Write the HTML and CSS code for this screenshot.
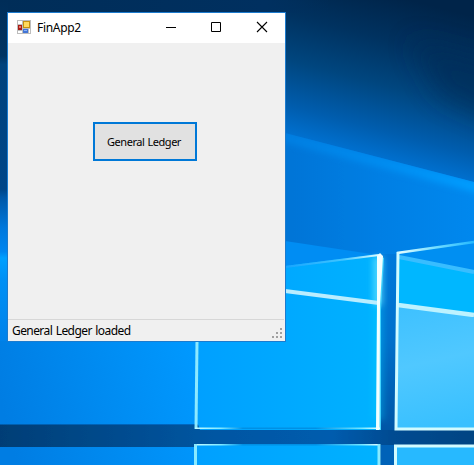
FILE: index.html
```html
<!DOCTYPE html>
<html lang="en">
<head>
<meta charset="utf-8">
<title>FinApp2</title>
<link rel="stylesheet" href="styles.css">
</head>
<body>
<main class="desktop">
  <svg class="wallpaper" width="474" height="465" viewBox="0 0 474 465" aria-hidden="true">
    <defs>
      <linearGradient id="sky" x1="410" y1="0" x2="365" y2="172" gradientUnits="userSpaceOnUse">
        <stop offset="0" stop-color="#002449"/><stop offset=".25" stop-color="#003260"/>
        <stop offset=".5" stop-color="#00467f"/><stop offset=".75" stop-color="#005dae"/><stop offset="1" stop-color="#007ce4"/>
      </linearGradient>
      <linearGradient id="top" x1="0" y1="0" x2="330" y2="0" gradientUnits="userSpaceOnUse">
        <stop offset="0" stop-color="#002d58"/><stop offset=".8" stop-color="#003060"/><stop offset="1" stop-color="#002f5d" stop-opacity="0"/>
      </linearGradient>
      <linearGradient id="left" x1="0" y1="0" x2="0" y2="430" gradientUnits="userSpaceOnUse">
        <stop offset="0" stop-color="#002d58"/><stop offset=".13" stop-color="#003463"/>
        <stop offset=".15" stop-color="#00427c"/><stop offset=".44" stop-color="#004688"/>
        <stop offset=".46" stop-color="#0058a8"/><stop offset=".53" stop-color="#0078dc"/>
        <stop offset=".585" stop-color="#0086f0"/><stop offset=".6" stop-color="#00a0ff"/>
        <stop offset=".65" stop-color="#0090f5"/><stop offset=".8" stop-color="#0082ea"/><stop offset="1" stop-color="#007ce2"/>
      </linearGradient>
      <linearGradient id="beam" x1="285" y1="0" x2="474" y2="0" gradientUnits="userSpaceOnUse">
        <stop offset="0" stop-color="#0074d6"/><stop offset=".5" stop-color="#007fe4"/><stop offset="1" stop-color="#0088ee"/>
      </linearGradient>
      <linearGradient id="edge" x1="285" y1="0" x2="474" y2="0" gradientUnits="userSpaceOnUse">
        <stop offset="0" stop-color="#007fe2"/><stop offset=".5" stop-color="#008cf0"/><stop offset="1" stop-color="#009dff"/>
      </linearGradient>
      <linearGradient id="floor" x1="0" y1="400" x2="198" y2="350" gradientUnits="userSpaceOnUse">
        <stop offset="0" stop-color="#007de3"/><stop offset="1" stop-color="#0099ff"/>
      </linearGradient>
      <linearGradient id="pane" x1="197" y1="0" x2="380" y2="0" gradientUnits="userSpaceOnUse">
        <stop offset="0" stop-color="#00a0ff"/><stop offset="1" stop-color="#00b2ff"/>
      </linearGradient>
      <linearGradient id="paneR" x1="400" y1="300" x2="430" y2="430" gradientUnits="userSpaceOnUse">
        <stop offset="0" stop-color="#3cc0ff"/><stop offset=".5" stop-color="#50c8ff"/><stop offset="1" stop-color="#38c0ff"/>
      </linearGradient>
      <linearGradient id="bar" x1="0" y1="0" x2="474" y2="0" gradientUnits="userSpaceOnUse">
        <stop offset="0" stop-color="#003e76"/><stop offset=".45" stop-color="#0056a2"/>
        <stop offset=".7" stop-color="#005cae"/><stop offset=".83" stop-color="#004b91"/><stop offset="1" stop-color="#004483"/>
      </linearGradient>
      <linearGradient id="post" x1="0" y1="250" x2="0" y2="430" gradientUnits="userSpaceOnUse">
        <stop offset="0" stop-color="#0079dc"/><stop offset=".5" stop-color="#0070cb"/><stop offset="1" stop-color="#0056a6"/>
      </linearGradient>
      <linearGradient id="ray" x1="285" y1="0" x2="380" y2="0" gradientUnits="userSpaceOnUse">
        <stop offset="0" stop-color="#18a4ff"/><stop offset=".6" stop-color="#40c4ff"/><stop offset="1" stop-color="#e4ffff"/>
      </linearGradient>
      <linearGradient id="rayR" x1="398" y1="0" x2="474" y2="0" gradientUnits="userSpaceOnUse">
        <stop offset="0" stop-color="#e8ffff"/><stop offset=".5" stop-color="#72ddff"/><stop offset="1" stop-color="#23b8ff"/>
      </linearGradient>
      <linearGradient id="sill" x1="197" y1="0" x2="380" y2="0" gradientUnits="userSpaceOnUse">
        <stop offset="0" stop-color="#bdfaff"/><stop offset=".13" stop-color="#80e8ff"/><stop offset=".25" stop-color="#0090e4"/>
        <stop offset=".65" stop-color="#0090e4"/><stop offset=".9" stop-color="#72e5ff"/><stop offset="1" stop-color="#eaffff"/>
      </linearGradient>
      <filter id="soft1" x="-20%" y="-20%" width="140%" height="140%"><feGaussianBlur stdDeviation=".7"/></filter>
      <filter id="soft3" filterUnits="userSpaceOnUse" x="180" y="80" width="320" height="380"><feGaussianBlur stdDeviation="3"/></filter>
      <filter id="soft12" filterUnits="userSpaceOnUse" x="180" y="-40" width="380" height="380"><feGaussianBlur stdDeviation="13"/></filter>
      <clipPath id="beam-clip"><path d="M285 133L474 182V300H285Z"/></clipPath>
    </defs>
    <rect width="474" height="465" fill="url(#sky)"/>
    <rect width="330" height="13" fill="url(#top)"/>
    <rect width="8" height="465" fill="url(#left)"/>
    <path d="M410 40L520 70V132L440 95Z" fill="#002c55" opacity=".6" filter="url(#soft12)"/>
    <path d="M285 133L474 182V300H285Z" fill="url(#beam)" filter="url(#soft1)"/>
    <path d="M280 136L480 188" stroke="url(#edge)" stroke-width="11" filter="url(#soft3)" clip-path="url(#beam-clip)"/>
    <path d="M285 241L378 255 285 268Z" fill="#008df3" filter="url(#soft1)"/>
    <path d="M0 341H198V424H0Z" fill="url(#floor)"/>
    <path d="M197 277L380 254V430H197Z" fill="url(#pane)"/>
    <path d="M380 254H398V465H380Z" fill="url(#post)"/>
    <path d="M378 258V420" stroke="#00ceff" stroke-width="12" opacity=".35" filter="url(#soft3)"/>
    <path d="M378 257V305" stroke="#7fe4ff" stroke-width="9" opacity=".6" filter="url(#soft3)"/>
    <path d="M379 255L384 258 381 310V430H377V258Z" fill="#43d4ff" filter="url(#soft1)"/>
    <path d="M397 252L474 242V430H397Z" fill="#008ff2"/>
    <path d="M399 256L474 271V430H397Z" fill="#00b7ff"/>
    <path d="M399 306L474 316V430H397Z" fill="url(#paneR)"/>
    <path d="M399 257L474 272" stroke="#38bdff" stroke-width="4" filter="url(#soft1)"/>
    <path d="M285 267L379 255" stroke="url(#ray)" stroke-width="2" filter="url(#soft1)"/>
    <path d="M397 253L474 242" stroke="url(#rayR)" stroke-width="2.5" filter="url(#soft1)"/>
    <path d="M285 291L379 303" stroke="#b9edff" stroke-width="4" filter="url(#soft1)"/>
    <path d="M398 305L474 315" stroke="#bdf2ff" stroke-width="4.4" filter="url(#soft1)"/>
    <path d="M-5 424.500H198L200 430H480V445H198L195 447H-5Z" fill="url(#bar)" filter="url(#soft1)"/>
    <path d="M0 447H195V465H0Z" fill="url(#floor)"/>
    <path d="M195 444H380V465H195Z" fill="url(#pane)"/>
    <path d="M381 445H394V465H381Z" fill="#0062b8"/>
    <path d="M395 446H474V465H395Z" fill="#27b9ff"/>
    <path d="M197 341L196 429" stroke="#8ce9ff" stroke-width="3"/>
    <path d="M195 427.500H380V429H195ZM195 444H380V445.500H195Z" fill="url(#sill)"/>
    <path d="M195.500 444V465M379 444V465" stroke="#88eaff" stroke-width="3"/>
    <path d="M377 256L380 253 383 256 380 304 379.500 430H376L377 302Z" fill="#f2ffff"/>
    <path d="M398 252L396 429H474M395.500 465V446H474" fill="none" stroke="#d2fbff" stroke-width="3"/>
  </svg>
  <section class="window">
    <header class="titlebar">
      <svg class="app-icon" width="14" height="14" viewBox="0 0 14 14" aria-hidden="true">
        <path d="M0 0H14V14H0Z" fill="#bdbdbd"/>
        <path d="M1 1H5V4H1ZM1 11H5V13H1ZM12 9H13V13H12Z" fill="#fff"/>
        <path d="M1 5H5V10H1Z" fill="#a81d16"/><path d="M2 6H4V8H2Z" fill="#e7776a"/>
        <path d="M6 1H13V8H6Z" fill="#c59010"/><path d="M7 2H12V7H7Z" fill="#ffda5c"/>
        <path d="M6 9H11V13H6Z" fill="#4275d5"/><path d="M7 10H10V11H7Z" fill="#8ab4ff"/>
      </svg>
      <h1 class="title">FinApp2</h1>
      <div class="controls">
        <svg width="46" height="29" viewBox="0 0 46 29" role="img" aria-label="Minimize"><path d="M19 14.500H29" stroke="#000"/></svg>
        <svg width="46" height="29" viewBox="0 0 46 29" role="img" aria-label="Maximize"><path d="M18.500 9.500H27.500V18.500H18.500Z" fill="none" stroke="#000"/></svg>
        <svg width="46" height="29" viewBox="0 0 46 29" role="img" aria-label="Close"><path d="M18 9L28 19M28 9L18 19" stroke="#000" stroke-width="1.100"/></svg>
      </div>
    </header>
    <div class="content"><button class="ledger-button"><span class="button-label">General Ledger</span></button></div>
    <footer class="statusbar">
      <span class="status-text">General Ledger loaded</span>
      <svg class="grip" width="12" height="12" viewBox="0 0 12 12" aria-hidden="true">
        <path d="M9 1H11V3H9ZM5 5H7V7H5ZM9 5H11V7H9ZM1 9H3V11H1ZM5 9H7V11H5ZM9 9H11V11H9Z" fill="#a0a0a0"/>
      </svg>
    </footer>
  </section>
</main>
</body>
</html>
```
FILE: styles.css
```css
* { box-sizing: border-box; }
body { margin: 0; font-family: "Noto Sans", "Open Sans", sans-serif; font-size: 12px; color: #000; }
.desktop { position: relative; width: 474px; height: 465px; padding: 12px 0 0 7px; overflow: hidden; }
.wallpaper { position: absolute; inset: 0; }
.window { position: relative; display: flex; flex-direction: column; width: 279px; height: 330px; border: 1px solid #1c7bce; background: #f0f0f0; }
.titlebar { display: flex; align-items: center; height: 30px; padding-left: 9px; background: #fff; }
.app-icon { display: block; margin-bottom: 2px; }
.title { margin: 0 0 0 6px; font-size: 12px; font-weight: 400; line-height: 30px; letter-spacing: -.3px; white-space: nowrap; }
.controls { display: flex; align-self: flex-start; margin-left: auto; }
.controls svg { display: block; }
.content { flex: 1; padding: 79px 0 0 85px; }
.ledger-button { display: flex; align-items: center; justify-content: center; width: 104px; height: 39px; padding: 0 2px 0 0; border: 2px solid #0078d7; background: #e1e1e1; font: 11px "Noto Sans", sans-serif; letter-spacing: -.47px; word-spacing: .8px; color: #000; white-space: nowrap; }
.statusbar { display: flex; justify-content: space-between; height: 22px; margin-right: 1px; padding: 0 1px 0 4px; border-top: 1px solid #d7d7d7; line-height: 22px; }
.status-text { letter-spacing: -.58px; word-spacing: 1px; }
.grip { align-self: flex-end; margin-bottom: 2px; }
```
